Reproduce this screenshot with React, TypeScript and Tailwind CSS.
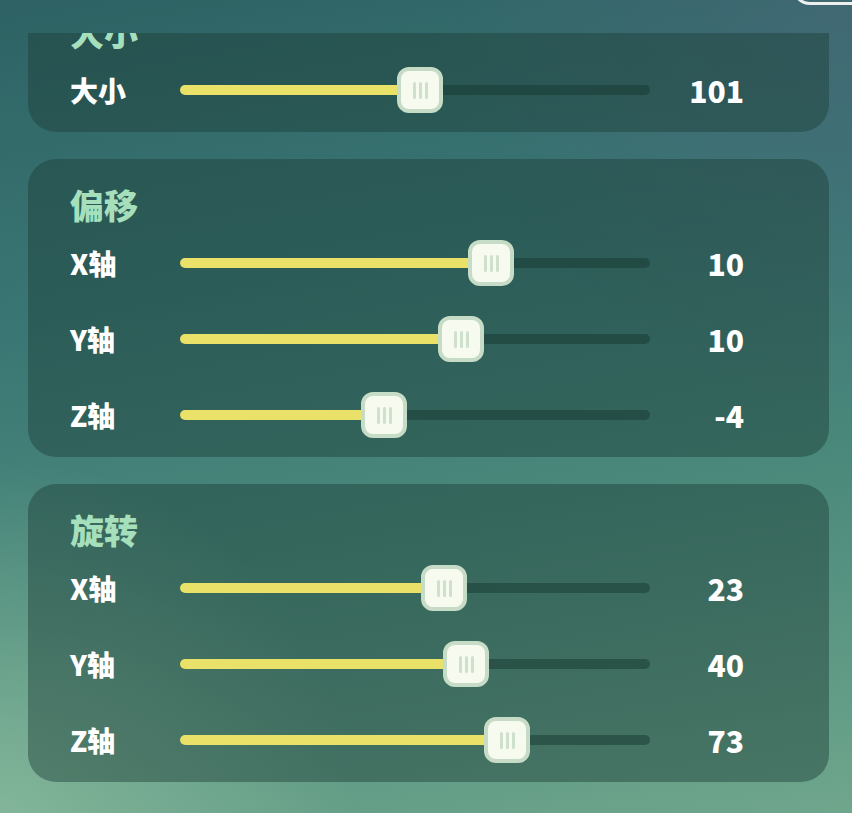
import React from 'react';

type Row = { label: string; value: string; pos: number };

const TRACK_W = 470;

function Slider({ pos }: { pos: number }) {
  return (
    <div className="relative h-[46px] w-[470px] flex items-center">
      <div className="h-[10px] w-full rounded-full bg-[#163830]/50" />
      <div
        className="absolute left-0 top-1/2 -translate-y-1/2 h-[10px] rounded-full bg-[#e9e168]"
        style={{ width: pos }}
      />
      <div
        className="absolute top-0 w-[46px] h-[46px] rounded-[12px] border-[4px] border-[#c6dcc6] bg-[#f6faef] flex items-center justify-center gap-[3px]"
        style={{ left: pos - 23 }}
      >
        <span className="w-[3px] h-[17px] rounded-full bg-[#cfe0cd]" />
        <span className="w-[3px] h-[17px] rounded-full bg-[#cfe0cd]" />
        <span className="w-[3px] h-[17px] rounded-full bg-[#cfe0cd]" />
      </div>
    </div>
  );
}

function Card({ title, rows }: { title: string; rows: Row[] }) {
  return (
    <div className="rounded-[28px] bg-[#1c3f38]/45 pl-[42px] pr-[85px] pt-[26px] pb-[4px]">
      <div className="h-[40px] leading-[40px] text-[34px] font-black text-[#a6dfbb]">{title}</div>
      {rows.map((r) => (
        <div key={r.label} className="h-[76px] flex items-center">
          <div className="w-[110px] text-[28px] font-black text-white">{r.label}</div>
          <Slider pos={Math.min(r.pos, TRACK_W)} />
          <div className="flex-1 text-right text-[30px] font-black text-white">{r.value}</div>
        </div>
      ))}
    </div>
  );
}

export default function App() {
  return (
    <div
      className="relative w-[852px] h-[813px] overflow-hidden flex flex-col bg-[linear-gradient(170deg,#2e6264_0%,#3a7774_35%,#4c8a7c_65%,#6fa68c_100%)]"
      style={{ fontFamily: '"Noto Sans CJK SC", "Noto Sans", sans-serif' }}
    >
      <div className="absolute inset-0 bg-[radial-gradient(circle_at_0%_100%,rgba(160,205,170,0.55),rgba(160,205,170,0)_30%)]" />
      <div className="absolute inset-0 bg-[radial-gradient(circle_at_100%_0%,rgba(80,100,125,0.45),rgba(80,100,125,0)_35%)]" />
      <div className="relative h-[33px] shrink-0 flex justify-end">
        <div className="w-[80px] h-[40px] -mt-[35px] -mr-[20px] rounded-[18px] border-[3px] border-white/90 bg-[#3f6a70]" />
      </div>
      <div className="relative flex-1 overflow-hidden">
        <div className="-mt-[47px] px-[28px] pr-[23px] flex flex-col gap-[27px]">
          <Card title="大小" rows={[{ label: '大小', value: '101', pos: 240 }]} />
          <Card
            title="偏移"
            rows={[
              { label: 'X轴', value: '10', pos: 311 },
              { label: 'Y轴', value: '10', pos: 281 },
              { label: 'Z轴', value: '-4', pos: 204 },
            ]}
          />
          <Card
            title="旋转"
            rows={[
              { label: 'X轴', value: '23', pos: 264 },
              { label: 'Y轴', value: '40', pos: 286 },
              { label: 'Z轴', value: '73', pos: 327 },
            ]}
          />
        </div>
      </div>
    </div>
  );
}
